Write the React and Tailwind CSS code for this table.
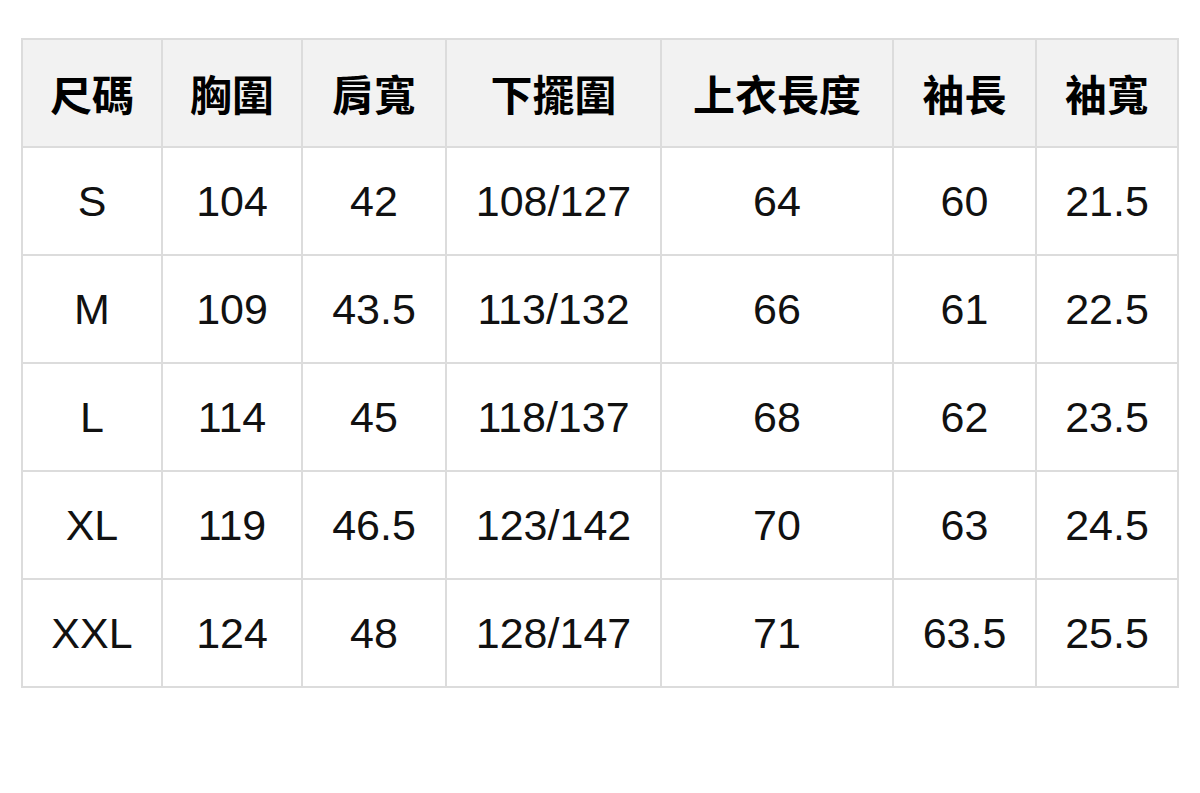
import React from "react";

const HEADERS = ["尺碼", "胸圍", "肩寬", "下擺圍", "上衣長度", "袖長", "袖寬"];
const WIDTHS = ["w-[140px]", "w-[140px]", "w-[144px]", "w-[215px]", "w-[232px]", "w-[143px]", "w-[142px]"];

const ROWS = [
  ["S", "104", "42", "108/127", "64", "60", "21.5"],
  ["M", "109", "43.5", "113/132", "66", "61", "22.5"],
  ["L", "114", "45", "118/137", "68", "62", "23.5"],
  ["XL", "119", "46.5", "123/142", "70", "63", "24.5"],
  ["XXL", "124", "48", "128/147", "71", "63.5", "25.5"],
];

export default function App() {
  return (
    <div className="w-[1200px] h-[793px] bg-white pt-[38px] pl-[21px]">
      <table className="table-fixed border-collapse w-[1156px] text-[#111]">
        <colgroup>
          {WIDTHS.map((w, i) => (
            <col key={i} className={w} />
          ))}
        </colgroup>
        <thead>
          <tr className="h-[108px] bg-[#f2f2f2]">
            {HEADERS.map((h) => (
              <th
                key={h}
                className="border-2 border-[#dcdcdc] text-center text-[42px] font-bold text-black font-['Noto_Sans_CJK_TC',sans-serif] leading-none"
              >
                {h}
              </th>
            ))}
          </tr>
        </thead>
        <tbody>
          {ROWS.map((row) => (
            <tr key={row[0]} className="h-[108px]">
              {row.map((cell, i) => (
                <td
                  key={i}
                  className="border-2 border-[#dcdcdc] text-center text-[43px] font-['Liberation_Sans',Arial,sans-serif] leading-none"
                >
                  {cell}
                </td>
              ))}
            </tr>
          ))}
        </tbody>
      </table>
    </div>
  );
}
